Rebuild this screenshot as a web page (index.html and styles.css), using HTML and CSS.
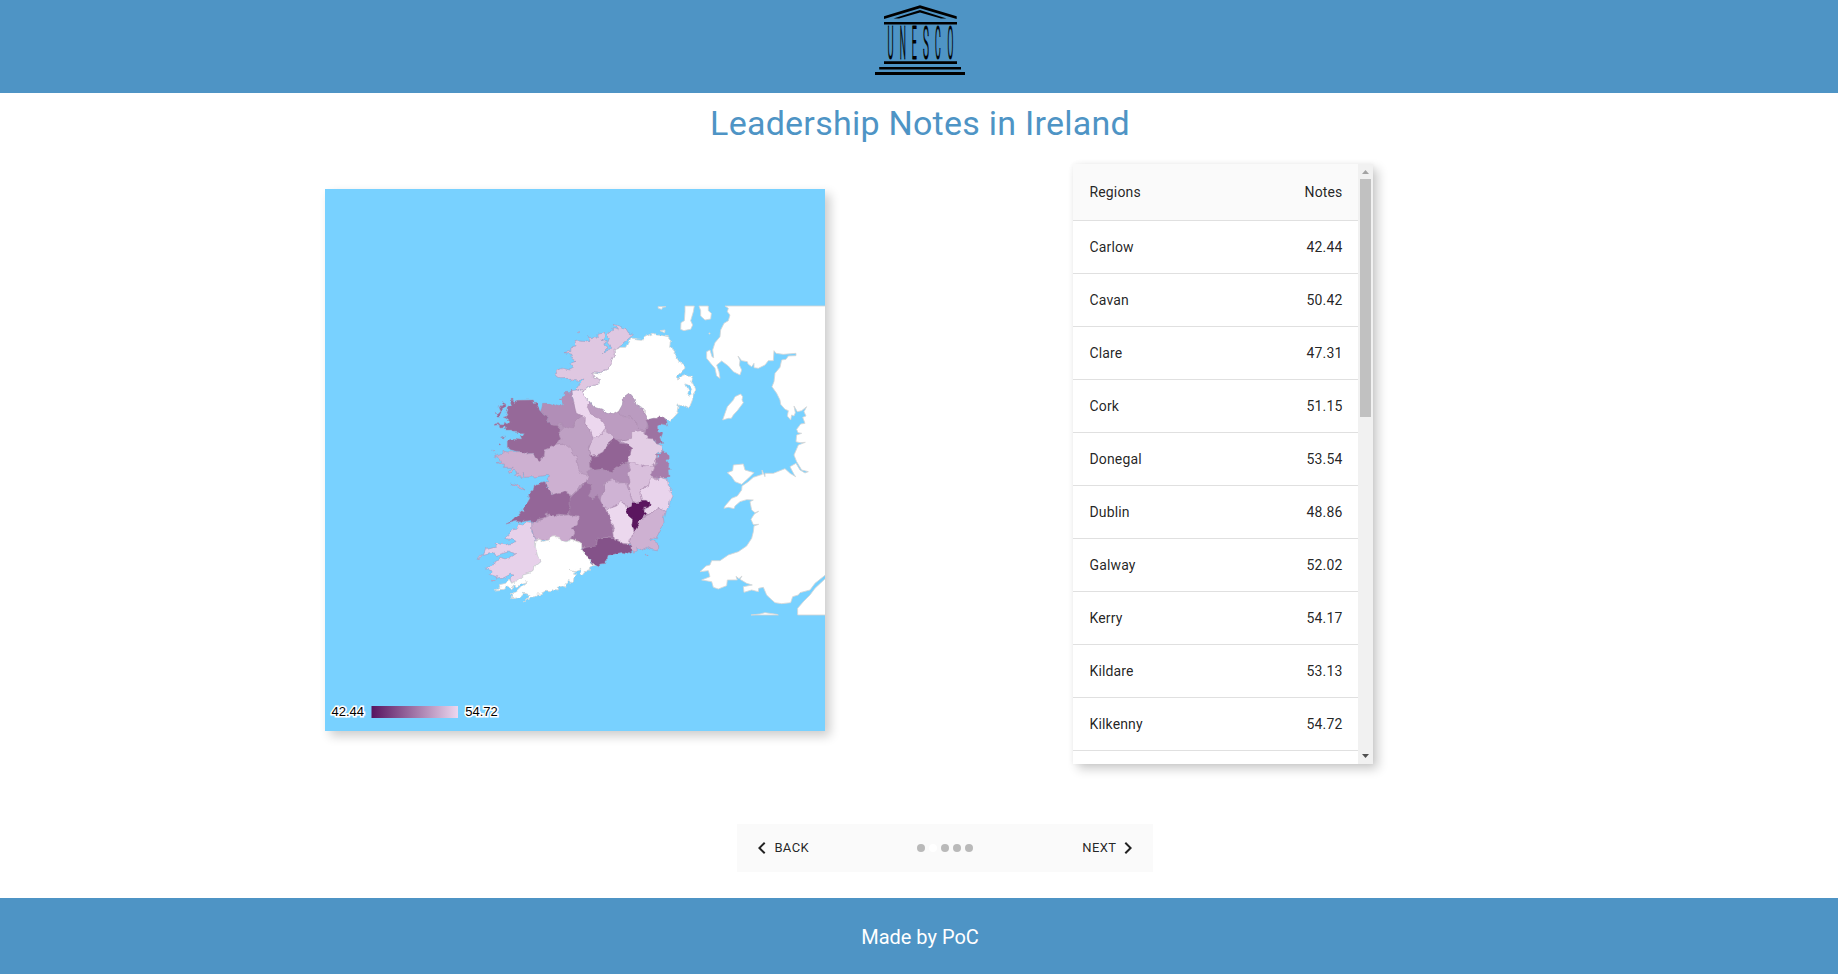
FILE: index.html
```html
<!DOCTYPE html>
<html lang="en">
<head>
<meta charset="utf-8">
<title>Leadership Notes in Ireland</title>
<link rel="stylesheet" href="styles.css">
</head>
<body>
<header class="header">
  <svg class="logo" viewBox="0 0 120 93" role="img" aria-label="UNESCO">
    <path d="M24 16.3 60 5.2l36.700 11.1v2.700L60 8.300 24 19z"/>
    <path d="M33.500 18.600 60 10l26.500 8.600H81L60 12.500 39 18.600z"/>
    <path d="M24 22h73v2.600H24zM24 61.200h73V64H24zM19.200 67H101v2.600H19.200zM15 72h90v2.900H15z"/>
    <g class="logo-letters">
      <text transform="translate(27.600 59.300) scale(.2 1)">U</text>
      <text transform="translate(39.700 59.300) scale(.185 1)">N</text>
      <text transform="translate(51.700 59.300) scale(.19 1)">E</text>
      <text transform="translate(63 59.300) scale(.215 1)">S</text>
      <text transform="translate(74.900 59.300) scale(.19 1)">C</text>
      <text transform="translate(87.600 59.300) scale(.185 1)">O</text>
    </g>
  </svg>
</header>
<main class="main">
  <h1 class="title">Leadership Notes in Ireland</h1>
  <div class="content">
    <section class="map">
      <svg class="map-canvas" viewBox="325 189 500 542">
        <defs>
          <linearGradient id="scale"><stop stop-color="#571460"/><stop offset="1" stop-color="#ecd7ef"/></linearGradient>
          <filter id="coast" filterUnits="userSpaceOnUse" x="470" y="300" width="240" height="320" color-interpolation-filters="sRGB">
            <feTurbulence type="fractalNoise" baseFrequency=".16" numOctaves="2" seed="4"/>
            <feDisplacementMap in="SourceGraphic" scale="5" xChannelSelector="R" yChannelSelector="G"/>
          </filter>
        </defs>
        <g class="land" transform="translate(650 290) scale(.33333)">
          <path d="M225 48 235 55 232 65 240 75 235 92 222 100 212 120 210 140 195 158 188 180 191 203 186 200 180 180 170 185 170 205 182 220 195 235 200 258 210 265 207 245 200 225 215 213 235 228 250 245 270 255 275 240 268 225 270 212 264 198 275 212 292 215 294 222 305 230 312 220 312 233 325 235 345 225 355 212 370 212 372 182 378 190 400 193 438 190 438 197 415 198 408 208 395 210 390 232 375 250 372 275 366 290 380 310 390 330 392 343 405 358 415 362 412 378 422 390 425 375 432 378 436 368 432 348 442 365 455 362 470 350 462 365 468 378 458 382 465 400 452 402 440 418 444 428 455 430 440 435 438 455 450 458 466 457 445 465 432 495 440 515 455 540 475 545 465 549 450 540 438 520 420 530 432 553 437 560 420 550 405 536 370 550 345 550 345 560 336 540 337 553 310 562 295 575 276 588 275 600 262 618 245 625 225 648 222 655 235 652 252 656 255 648 270 635 290 629 310 630 300 635 305 660 315 668 326 664 313 672 303 688 310 704 326 703 312 708 310 725 305 745 290 768 265 785 235 795 210 812 185 812 180 825 168 828 150 845 175 842 180 860 155 870 185 875 190 892 205 897 230 887 232 870 262 870 258 859 267 866 276 858 270 868 290 880 307 885 280 890 282 907 305 900 325 905 326 895 340 892 350 915 360 925 375 938 395 941 422 938 428 920 445 915 450 908 480 900 495 880 525 856 530 856 530 48Z"/>
          <path d="M443 975V955L460 935 480 915 495 895 530 862V975ZM303 975 330 972 345 968 380 973 385 975ZM232 548 248 542 250 525 280 522 285 540 312 548 295 565 275 583 255 575 245 560ZM272 312 278 320 276 330 280 338 262 362 250 375 244 385 235 385 218 390 225 370 232 350 250 330 255 320ZM105 48H133L130 65 122 92 128 105 122 118 110 120 102 122 92 118 93 98 103 92 105 65ZM147 48H175V62L184 70 182 87 165 90 152 78 152 62ZM24 50H48L38 52 35 58 25 55ZM30 122 45 120 44 128ZM177 129h3v3h-3z"/>
        </g>
        <g filter="url(#coast)">
        <path class="county-base" transform="translate(470 310) scale(.33333)" d="M290 270 345 275 400 330 480 275 535 350 560 420 560 500 585 560 565 610 520 690 440 715 370 740 300 690 200 680 195 620 230 580 270 530 230 480 170 450 220 430 240 350Z"/>
        <g class="county" transform="translate(470 310) scale(.33333)">
          <path class="land" d="M432 118 455 112 470 112 484 84 500 87 515 88 528 80 550 70 560 75 580 77 595 80 602 90 599 112 612 120 610 128 622 140 630 155 643 165 645 178 632 190 620 202 620 210 635 200 648 196 662 196 667 205 665 215 674 230 678 240 670 252 668 265 658 290 648 292 640 288 625 285 620 312 600 335 585 328 565 330 550 325 528 330 522 312 522 300 505 292 495 270 478 252 460 265 457 285 445 305 430 314 410 310 395 298 370 290 360 275 345 262 335 243 355 230 375 225 392 210 370 200 368 188 385 192 410 180 422 165 425 150 433 135Z"/>
          <path class="sea" d="M645 218 657 223 665 238 661 253 651 258 656 242Z"/>
          <path fill="#dfc7e1" d="M255 193 265 180 278 175 300 180 311 174 300 160 315 155 300 143 306 133 285 127 302 125 303 110 318 108 315 92 330 90 345 92 360 95 355 80 366 90 375 78 385 85 384 70 400 66 404 80 396 92 408 88 405 105 414 112 407 118 396 134 416 122 422 110 412 98 418 82 411 76 425 65 430 56 445 60 432 43 452 50 468 56 475 68 490 74 475 86 460 98 450 113 432 118 433 135 425 150 422 165 410 180 385 190 368 188 370 200 392 210 375 225 355 228 345 238 335 243 318 238 330 220 344 205 325 212 318 205 302 214 300 205 275 206 260 200Z"/>
          <path fill="#bc9cc1" d="M358 275 370 290 395 298 410 310 430 314 445 305 465 320 480 320 495 332 505 352 525 360 520 365 490 370 485 385 450 390 435 386 405 358 395 330 362 312 350 292Z"/>
          <path fill="#ba9bc0" d="M478 252 495 270 505 292 522 300 522 312 530 330 528 350 522 362 505 352 495 332 480 320 460 320 445 308 457 285 460 265Z"/>
          <path fill="#e3cde5" d="M485 365 515 362 528 372 540 370 547 388 562 402 572 405 578 420 560 430 558 455 545 473 520 465 500 470 475 462 470 450 480 435 485 412 470 402 450 392 485 385Z"/>
          <path fill="#dac1dd" d="M405 358 430 375 435 387 410 405 400 425 385 435 362 440 355 420 362 400 370 385 385 380Z"/>
          <path fill="#bea0c3" d="M335 318 346 325 345 342 350 352 362 360 370 385 362 400 355 415 360 440 358 460 360 485 350 500 330 495 322 470 320 445 300 420 280 402 262 405 272 385 266 370 285 350 310 350 320 330Z"/>
          <path fill="#b18eb7" d="M268 265 285 258 286 247 298 248 306 240 308 260 312 285 320 310 335 318 320 330 310 345 302 356 285 350 270 340 260 347 245 345 230 332 235 322 212 305 218 280 240 280 252 284 265 290 282 282 276 270Z"/>
          <path fill="#ecd7ee" d="M306 242 320 240 335 243 345 262 358 275 352 290 362 312 380 320 395 330 405 345 402 360 385 382 370 385 362 360 350 352 345 340 346 325 335 318 320 310 312 280Z"/>
          <path fill="#966999" d="M120 268 132 268 134 275 145 271 190 270 193 278 200 277 208 300 215 308 235 320 230 332 245 345 268 348 266 370 272 385 262 402 240 415 225 420 222 440 208 452 195 440 190 430 170 432 150 425 125 420 112 415 112 393 125 388 155 390 152 380 160 368 128 366 125 360 107 360 105 350 90 351 88 344 73 346 80 341 102 342 104 334 115 343 120 335 108 325 100 322 113 318 108 308 114 292 125 287Z"/>
          <path fill="#966999" d="M88 292 100 278 107 282 108 290 98 293 96 308 88 322 84 312 92 305ZM95 382 106 378 104 383ZM84 404 90 401 91 405ZM73 310 77 311 77 314Z"/>
          <path fill="#9d73a2" d="M524 332 550 325 562 325 565 317 578 321 590 335 592 345 568 341 562 345 563 362 578 370 572 385 578 400 560 402 554 390 530 388 531 376 524 370 532 348Z"/>
          <path fill="#926495" d="M435 385 452 400 470 402 485 412 480 435 470 455 445 470 425 485 395 478 375 481 360 475 358 440 385 436 400 425 410 405Z"/>
          <path fill="#a67dac" d="M555 432 568 432 580 418 595 430 598 442 590 452 597 462 595 473 604 476 594 480 597 503 580 505 565 505 542 498 550 480 560 462 556 450 568 442Z"/>
          <path fill="#dfc7e1" d="M323 68h5v3h-5z"/>
        </g>
        <g class="county" transform="translate(470 460) scale(.33333)">
          <path fill="#cdb0d1" d="M80 12 92 8 88 -2 74 -10 98 -18 100 -27 108 -24 150 -25 170 -18 190 -20 196 -10 208 2 222 -10 225 -30 262 -44 285 -48 300 -38 305 -25 320 -5 325 25 335 42 355 45 350 65 325 80 305 105 285 95 265 100 245 105 240 90 225 75 225 65 235 66 232 55 242 48 228 46 200 50 163 52 160 40 155 52 134 48 146 40 132 30 118 40 115 32 130 22 100 22 100 12ZM65 -29 78 -28 75 -24ZM122 70 135 72 150 78 165 90 150 84 135 77Z"/>
          <path fill="#b08db6" d="M350 35 365 30 395 30 425 35 445 20 470 8 480 35 475 50 480 65 475 72 455 65 435 60 410 65 400 75 402 90 392 105 390 122 378 108 362 120 355 95 365 80 350 62 356 45Z"/>
          <path fill="#d9bfdc" d="M475 10 490 5 520 18 555 15 550 30 542 50 565 58 540 65 535 80 515 85 510 100 515 122 495 130 488 125 480 100 475 80 480 65 475 40 482 30Z"/>
          <path fill="#cfb3d4" d="M400 75 410 65 430 58 440 70 470 68 472 85 480 100 488 125 488 140 472 145 462 125 440 135 420 145 400 140 390 125 395 105 405 90Z"/>
          <path fill="#e9d4ec" d="M542 55 560 60 572 52 592 58 595 75 602 85 600 95 606 108 600 120 598 140 588 152 570 145 550 155 540 165 520 160 525 145 540 135 535 122 515 120 510 100 518 85 535 80Z"/>
          <path fill="#ceb1d2" d="M518 175 540 165 555 150 572 145 586 152 580 175 582 190 570 208 562 225 558 238 542 236 565 252 566 262 560 272 540 268 530 262 515 270 500 262 502 272 492 278 485 265 480 245 490 220 495 205 508 180ZM526 283h5v2h-5z"/>
          <path fill="#ecd8ee" d="M400 140 420 145 440 138 452 125 465 130 472 155 488 180 485 195 492 215 480 240 478 252 458 250 440 238 432 232 432 210 425 190 415 165Z"/>
          <path fill="#5b165f" stroke="#4d0d52" d="M470 145 485 140 487 132 510 132 512 122 532 122 540 132 538 139 520 140 520 150 526 160 518 172 508 178 505 195 495 210 486 195 489 178 476 168 470 155Z"/>
          <path fill="#9c72a1" d="M345 66 362 75 365 90 358 110 368 120 380 106 390 120 400 140 415 165 425 190 425 205 432 225 432 235 400 232 382 240 380 258 350 262 335 262 330 248 305 235 315 215 303 205 322 195 325 168 295 162 300 145 300 115 315 100 335 82Z"/>
          <path fill="#845289" d="M333 268 350 262 380 258 382 238 400 233 432 236 445 242 460 252 476 253 486 262 486 274 475 280 460 277 435 282 414 286 412 296 405 300 405 310 390 312 385 320 372 315 362 300 345 285Z"/>
          <path fill="#946698" d="M108 192 130 180 155 152 162 156 165 140 180 115 172 108 190 90 193 72 202 75 222 68 226 80 240 90 245 105 265 98 285 95 300 108 300 145 292 165 270 162 245 168 240 160 232 165 232 155 225 158 226 172 195 180 195 186 184 184 182 178 160 182 155 186 140 184Z"/>
          <path fill="#cbaccf" d="M185 185 200 187 225 172 240 165 260 169 295 165 325 170 322 195 303 205 315 215 305 235 290 245 270 238 258 230 240 240 200 240 190 225 185 205Z"/>
          <path fill="#e7d1ea" d="M145 192 155 195 172 185 185 187 185 215 198 240 196 260 202 285 210 305 195 318 192 335 160 345 145 358 125 370 120 356 132 345 118 343 95 355 76 357 80 350 58 343 66 334 50 328 52 322 75 316 72 306 90 295 110 300 140 280 130 282 114 276 95 281 80 286 65 280 40 286 48 266 78 258 76 250 105 255 135 248 128 240 105 235 120 220 122 210 140 208ZM24 298 32 286 37 284 30 294ZM67 361h5v2h-5z"/>
          <path class="land" d="M198 240 208 238 222 244 240 240 245 232 258 230 268 232 275 240 290 245 305 238 335 250 335 262 333 268 345 285 355 292 362 305 374 315 362 322 360 330 345 332 340 345 328 342 332 325 315 332 300 328 318 335 310 342 320 345 312 352 310 365 295 362 285 370 288 382 278 378 262 382 265 390 250 388 240 395 225 394 210 402 200 402 195 410 178 412 163 423 180 404 160 400 148 412 125 416 132 404 120 402 140 395 160 375 172 365 150 372 142 382 132 374 122 386 110 378 100 388 75 390 90 382 88 374 110 370 118 358 125 370 145 358 160 345 192 335 195 318 210 305 202 285 196 260Z"/>
        </g>
        </g>
        <rect x="371.500" y="706" width="86.500" height="12" fill="url(#scale)"/>
        <g class="legend-text">
          <text x="331.500" y="716">42.44</text>
          <text x="465.300" y="716">54.72</text>
        </g>
      </svg>
    </section>
    <section class="panel">
      <table class="table">
        <thead><tr><th>Regions</th><th>Notes</th></tr></thead>
        <tbody>
          <tr><td>Carlow</td><td>42.44</td></tr>
          <tr><td>Cavan</td><td>50.42</td></tr>
          <tr><td>Clare</td><td>47.31</td></tr>
          <tr><td>Cork</td><td>51.15</td></tr>
          <tr><td>Donegal</td><td>53.54</td></tr>
          <tr><td>Dublin</td><td>48.86</td></tr>
          <tr><td>Galway</td><td>52.02</td></tr>
          <tr><td>Kerry</td><td>54.17</td></tr>
          <tr><td>Kildare</td><td>53.13</td></tr>
          <tr><td>Kilkenny</td><td>54.72</td></tr>
        </tbody>
      </table>
      <div class="scrollbar">
        <svg class="scroll-arrow" viewBox="0 0 15 15"><path fill="#a3a3a3" d="M4 10h7L7.500 6z"/></svg>
        <div class="thumb"></div>
        <svg class="scroll-arrow scroll-down" viewBox="0 0 15 15"><path fill="#505050" d="M4 5h7L7.500 9z"/></svg>
      </div>
    </section>
  </div>
  <nav class="stepper">
    <button class="step-button"><svg class="chevron" viewBox="0 0 24 24"><path d="M15.410 16.590 10.830 12l4.580-4.590L14 6l-6 6 6 6z"/></svg>Back</button>
    <div class="dots"><i class="dot"></i><i class="dot dot-active"></i><i class="dot"></i><i class="dot"></i><i class="dot"></i></div>
    <button class="step-button">Next<svg class="chevron" viewBox="0 0 24 24"><path d="M8.590 16.590 13.170 12 8.590 7.410 10 6l6 6-6 6z"/></svg></button>
  </nav>
</main>
<footer class="footer">Made by PoC</footer>
</body>
</html>
```
FILE: styles.css
```css
* { box-sizing: border-box; }
body {
  margin: 0;
  height: 974px;
  display: flex;
  flex-direction: column;
  overflow: hidden;
  background: #fff;
  color: rgba(0, 0, 0, .87);
  font-family: Roboto, Arial, sans-serif;
}
.header {
  height: 93px;
  flex: none;
  display: flex;
  justify-content: center;
  padding-left: 2px;
  background: #4e94c5;
}
.logo { display: block; width: 120px; height: 93px; }
.logo-letters {
  font: 300 46.5px Roboto, sans-serif;
  stroke: #000;
  stroke-width: 1.2;
}
.main { flex: 1; }
.title {
  margin: 9px 0 0;
  padding-left: 2px;
  height: 42px;
  color: #4e94c5;
  font-size: 34px;
  font-weight: 400;
  line-height: 42px;
  letter-spacing: .00735em;
  text-align: center;
}
.content {
  display: flex;
  align-items: flex-start;
  justify-content: space-between;
  margin: 20px 465px 0 325px;
}
.map {
  width: 500px;
  height: 542px;
  margin-top: 25px;
  background: #78d1ff;
  box-shadow: 5px 5px 10px rgba(0, 0, 0, .2);
}
.map-canvas { display: block; width: 500px; height: 542px; }
.county-base { fill: #b596bb; }
.county { stroke: #a98aae; stroke-opacity: .55; stroke-width: 2.5; stroke-linejoin: round; }
.land, .county .land { fill: #fff; stroke: #d6d6d6; stroke-opacity: 1; stroke-width: 2.5; }
.county .sea { fill: #78d1ff; stroke: #d6d6d6; }
.legend-text {
  font: 13px "Liberation Sans", Arial, sans-serif;
  fill: #000;
  stroke: #fff;
  stroke-width: 3px;
  paint-order: stroke;
}
.panel {
  display: flex;
  width: 300px;
  height: 600px;
  overflow: hidden;
  background: #fff;
  box-shadow: 5px 5px 10px rgba(0, 0, 0, .2), 0 0 5px rgba(0, 0, 0, .05);
}
.table {
  width: 285px;
  height: 587px;
  border-collapse: separate;
  border-spacing: 0;
  font-size: 14px;
  letter-spacing: .01071em;
}
.table th, .table td {
  height: 53px;
  padding: 0 15.5px 0 16.5px;
  border-bottom: 1px solid #e0e0e0;
  font-weight: 400;
  text-align: left;
}
.table th { height: 57px; background: #fafafa; }
.table th:last-child, .table td:last-child { text-align: right; }
.scrollbar {
  display: flex;
  flex-direction: column;
  width: 15px;
  background: #f1f1f1;
}
.scroll-arrow { display: block; width: 15px; height: 15px; }
.scroll-down { margin-top: auto; }
.thumb { height: 238px; margin: 0 2px; background: #c1c1c1; }
.stepper {
  display: flex;
  align-items: center;
  justify-content: space-between;
  width: 416px;
  height: 48px;
  margin: 60px 0 0 737.4px;
  padding: 8px;
  background: #fafafa;
}
.step-button {
  display: flex;
  align-items: center;
  padding: 4px 5px;
  border: 0;
  background: none;
  color: inherit;
  font: 400 13px/22px Roboto, sans-serif;
  letter-spacing: .02857em;
  text-transform: uppercase;
}
.chevron { width: 24px; height: 24px; fill: currentColor; }
.dots { display: flex; gap: 4px; margin-right: 1px; }
.dot { width: 8px; height: 8px; border-radius: 50%; background: #b9b9b9; }
.dot-active { background: #fff; }
.footer {
  display: flex;
  align-items: center;
  justify-content: center;
  flex: none;
  height: 76px;
  padding: 2px 0 0 2px;
  background: #4e94c5;
  color: #fff;
  font-size: 20px;
  letter-spacing: 0;
}
```
